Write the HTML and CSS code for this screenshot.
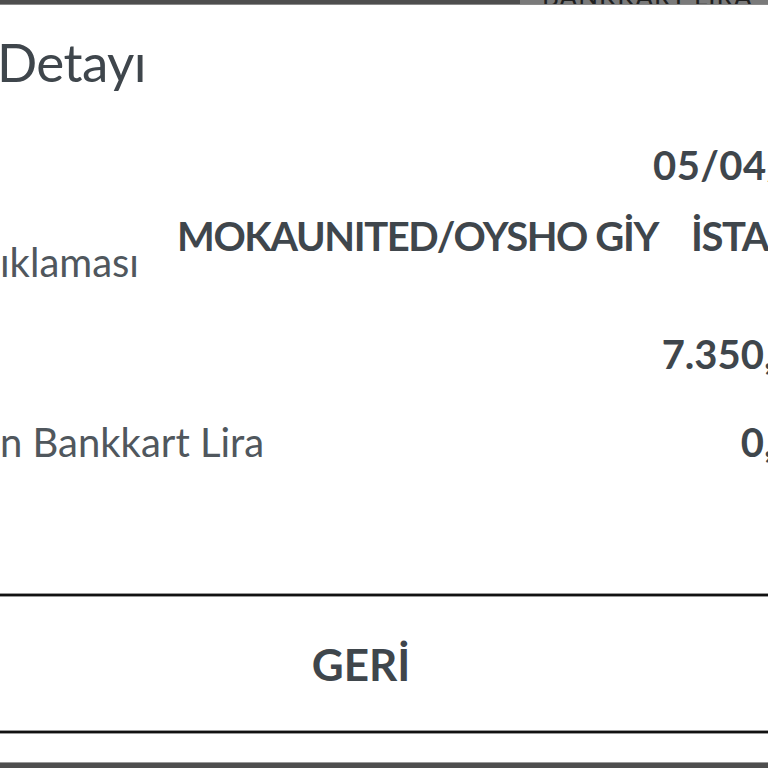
FILE: index.html
```html
<!DOCTYPE html>
<html lang="tr">
<head>
<meta charset="utf-8">
<link rel="stylesheet" href="styles.css">
</head>
<body>
<div class="screen">
  <div class="topbar">
    <div class="topbar-dark"></div>
    <div class="topbar-text"><span>BANKKART LİRA</span></div>
  </div>
  <div class="dialog">
    <h1 class="title">Detayı</h1>
    <div class="rows">
      <div class="row row-date">
        <div class="label"></div>
        <div class="value date">05/04/2023</div>
      </div>
      <div class="row row-desc">
        <div class="label">ıklaması</div>
        <div class="value desc">MOKAUNITED/OYSHO GİY<span class="gap"></span>İSTANBUL</div>
      </div>
      <div class="row row-amount">
        <div class="label"></div>
        <div class="value amount">7.350,00 TL</div>
      </div>
      <div class="row row-points">
        <div class="label">n Bankkart Lira</div>
        <div class="value points">0,00 TL</div>
      </div>
    </div>
    <div class="actions">
      <button class="back">GERİ</button>
    </div>
  </div>
  <div class="bottombar"></div>
</div>
</body>
</html>
```
FILE: styles.css
```css
* { box-sizing: border-box; }
html, body { margin: 0; padding: 0; background: #ffffff; }
body {
  width: 768px;
  height: 768px;
  overflow: hidden;
  font-family: "Lato", "Open Sans", sans-serif;
  color: #40474d;
}
.screen {
  width: 768px;
  height: 768px;
  display: flex;
  flex-direction: column;
  overflow: hidden;
}
.topbar {
  height: 5px;
  flex: none;
  display: flex;
  background: #4e4e4e;
  border-bottom: 1px solid #8a8a8a;
  overflow: hidden;
}
.topbar-dark { flex: none; width: 520px; }
.topbar-text {
  flex: 1;
  background: #7a7a7a;
  display: flex;
  align-items: flex-end;
  padding-left: 22px;
}
.topbar-text span {
  font-size: 26px;
  line-height: 20px;
  color: #202020;
  letter-spacing: 1px;
  white-space: nowrap;
  margin-bottom: -2px;
}
.dialog {
  flex: 1;
  display: flex;
  flex-direction: column;
}
.title {
  margin: 0;
  padding: 27px 0 0 0;
  margin-left: -3px;
  font-size: 53px;
  font-weight: 400;
  letter-spacing: -0.6px;
  line-height: 60px;
  color: #3f464c;
  height: 114px;
}
.rows {
  display: flex;
  flex-direction: column;
}
.row {
  display: flex;
  justify-content: space-between;
  white-space: nowrap;
}
.label {
  font-size: 40px;
  color: #50575d;
  font-weight: 400;
}
.value {
  font-size: 40px;
  font-weight: 700;
  color: #3f464c;
  margin-right: -105px;
  line-height: 50px;
}
.value.date { margin-right: -112px; letter-spacing: 0.4px; }
.row-date { height: 71px; align-items: flex-end; }
.row-desc { height: 100px; align-items: flex-start; }
.row-desc .label { line-height: 50px; padding-top: 47px; }
.row-desc .value {
  margin-left: 38px;
  margin-right: 0;
  padding-top: 21px;
  flex: 1;
  letter-spacing: -1.4px;
}
.gap { display: inline-block; width: 33px; }
.row-amount { height: 89px; align-items: flex-end; }
.row-points { height: 108px; padding-top: 18px; align-items: center; }
.actions {
  margin-top: 107px;
  border-top: 2px solid #111;
  border-bottom: 2px solid #111;
  box-shadow: 0 -1px 0 #999, 0 1px 0 #999, inset 0 1px 0 #999, inset 0 -1px 0 #999;
  height: 139px;
  margin-left: -10px;
  margin-right: -10px;
  display: flex;
  justify-content: center;
  align-items: center;
}
.back {
  border: none;
  background: transparent;
  font-family: "Lato", "Open Sans", sans-serif;
  font-size: 44px;
  font-weight: 700;
  color: #3f464c;
  padding: 0;
  margin-left: -46px;
}
.bottombar {
  margin-top: auto;
  height: 6px;
  flex: none;
  background: #4e4e4e;
  border-top: 1px solid #999;
}
```
